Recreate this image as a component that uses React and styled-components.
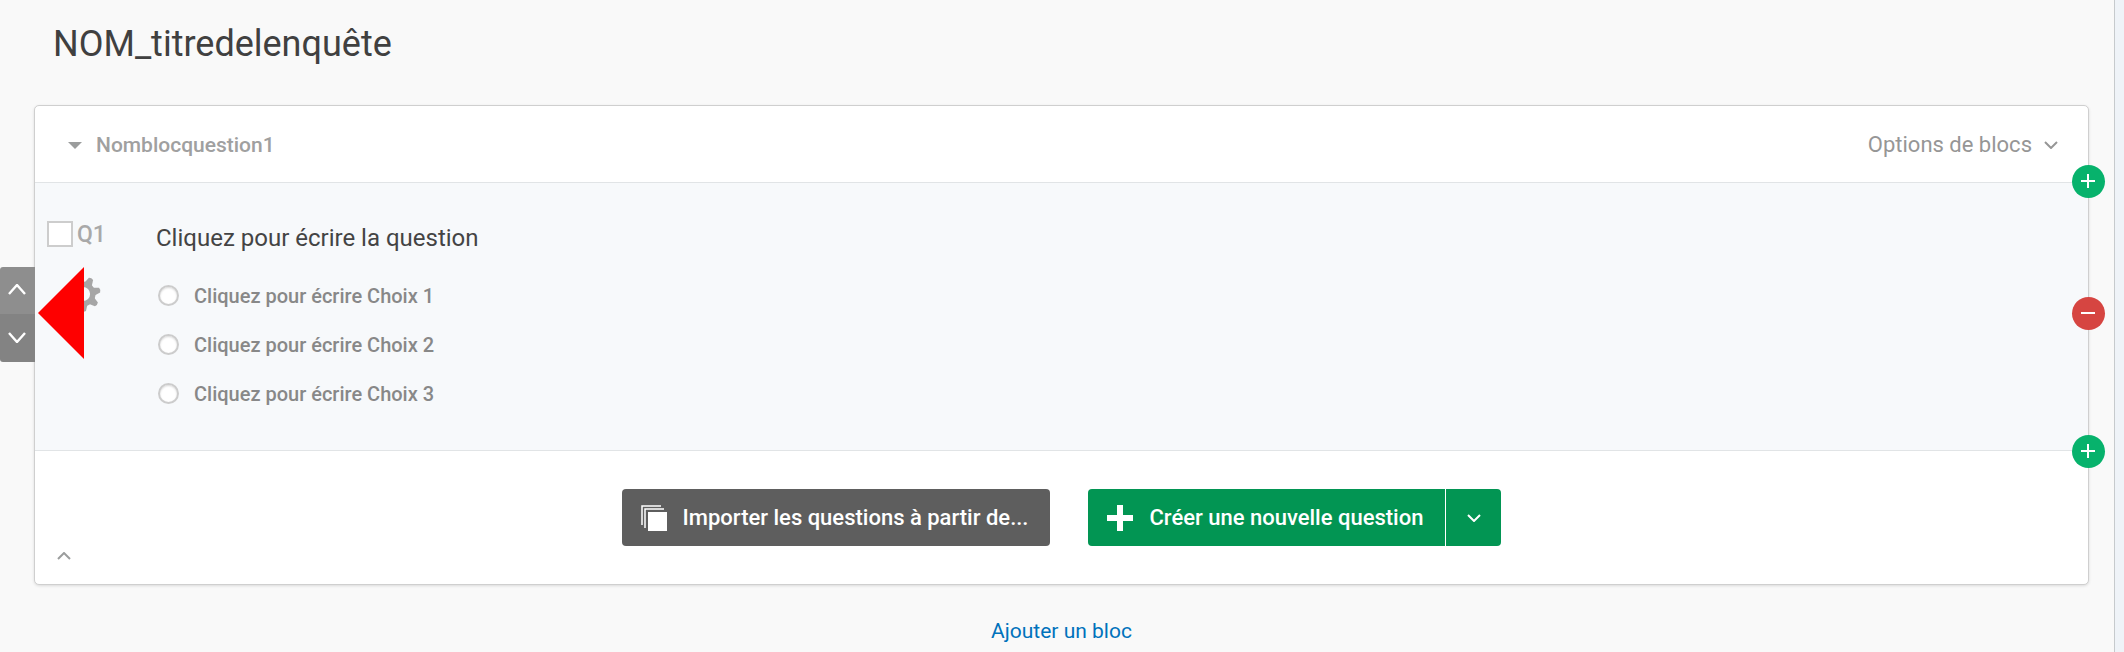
import React from "react";
import styled, { createGlobalStyle } from "styled-components";

const GlobalStyle = createGlobalStyle`
  *, *::before, *::after { box-sizing: border-box; }
  body {
    margin: 0;
    background: #f9f9f9;
    font-family: Roboto, "Liberation Sans", sans-serif;
    color: #404040;
  }
  button { font: inherit; border: 0; margin: 0; padding: 0; cursor: pointer; }
  svg { display: block; flex: none; }
`;

const Page = styled.div`
  display: flex;
  min-height: 100vh;
`;

const Main = styled.main`
  flex: 1;
  min-width: 0;
  padding: 22px 25px 8px 34px;
`;

const Rail = styled.aside`
  flex: none;
  width: 10px;
  background: #eff3f8;
  border-left: 1px solid #c6cacd;
`;

const Title = styled.h1`
  margin: 0 0 39px 19px;
  font-size: 36px;
  line-height: 44px;
  font-weight: 400;
`;

const Card = styled.section`
  background: #fff;
  border: 1px solid #cfcfcf;
  border-radius: 5px;
  box-shadow: 0 1px 3px rgba(0, 0, 0, 0.12);
`;

const BlockHeader = styled.header`
  display: flex;
  justify-content: space-between;
  align-items: center;
  height: 77px;
  padding: 2px 30px 0 33px;
  border-bottom: 1px solid #e1e4e6;
`;

const BlockToggle = styled.button`
  display: flex;
  align-items: center;
  gap: 14px;
  background: none;
  color: #9b9d9d;
`;

const BlockName = styled.span`
  font-size: 21px;
  line-height: 28px;
  font-weight: 500;
  color: #a0a0a0;
`;

const OptionsButton = styled.button`
  display: flex;
  align-items: center;
  gap: 12px;
  background: none;
  color: #969696;
  font-size: 22px;
  line-height: 28px;
`;

const Question = styled.article`
  position: relative;
  display: flex;
  padding: 38px 30px 32px 12px;
  background: #f7f9fb;
  border-bottom: 1px solid #e1e4e6;
`;

const QuestionSide = styled.div`
  flex: none;
  display: flex;
  flex-direction: column;
  align-items: flex-start;
  gap: 29px;
  width: 109px;
`;

const QuestionTag = styled.label`
  display: flex;
  align-items: center;
  gap: 4px;
  font-size: 23px;
  line-height: 25px;
  font-weight: 500;
  color: #a9a9a9;
`;

const Checkbox = styled.input`
  appearance: none;
  width: 26px;
  height: 26px;
  margin: 0;
  background: #fff;
  border: 2px solid #cdcdcd;
`;

const GearButton = styled.button`
  margin-left: 18px;
  background: none;
  color: #a6a6a6;
`;

const QuestionBody = styled.div`
  flex: 1;
  min-width: 0;
`;

const QuestionText = styled.h3`
  margin: 0 0 16px;
  font-size: 24px;
  line-height: 34px;
  font-weight: 400;
  color: #444444;
`;

const Choices = styled.ul`
  margin: 0;
  padding: 0;
  list-style: none;
`;

const Choice = styled.label`
  display: flex;
  align-items: center;
  gap: 15px;
  height: 49px;
  padding-left: 2px;
  font-size: 20px;
  line-height: 28px;
  font-weight: 500;
  color: #888888;
`;

const Radio = styled.input`
  appearance: none;
  width: 21px;
  height: 21px;
  margin: 0;
  background: #fff;
  border: 2px solid #cccccc;
  border-radius: 50%;
  box-shadow: inset 0 1px 2px rgba(0, 0, 0, 0.15);
`;

const MoveControls = styled.div`
  position: absolute;
  top: 84px;
  left: -35px;
  width: 35px;
  border-radius: 3px 0 0 3px;
  overflow: hidden;
`;

const MoveButton = styled.button`
  display: flex;
  align-items: center;
  justify-content: center;
  width: 100%;
  height: ${(p) => (p.$down ? 48 : 47)}px;
  padding: 0 2px 2px 0;
  background: ${(p) => (p.$down ? "#838383" : "#8e8e8e")};
  color: #fff;
`;

const Pointer = styled.svg`
  position: absolute;
  top: 84px;
  left: 3px;
`;

const RoundButton = styled.button`
  position: absolute;
  right: -17px;
  top: ${(p) => p.$top}px;
  display: flex;
  align-items: center;
  justify-content: center;
  width: 33px;
  height: 33px;
  border-radius: 50%;
  background: ${(p) => (p.$danger ? "#d64541" : "#07b26c")};
  color: #fff;
`;

const BlockFooter = styled.footer`
  padding: 38px 17px 18px;
`;

const Actions = styled.div`
  display: flex;
  justify-content: center;
  gap: 38px;
`;

const ActionButton = styled.button`
  display: flex;
  align-items: center;
  gap: 16px;
  height: 57px;
  padding: 0 22px 0 19px;
  border-radius: ${(p) => (p.$split ? "4px 0 0 4px" : "4px")};
  background: ${(p) => (p.$primary ? "#029553" : "#5e5e5e")};
  color: #fff;
  font-size: 22px;
  line-height: 32px;
  font-weight: 500;
`;

const SplitButton = styled.div`
  display: flex;
  gap: 1px;
`;

const MenuButton = styled.button`
  display: flex;
  align-items: center;
  justify-content: center;
  width: 55px;
  height: 57px;
  border-radius: 0 4px 4px 0;
  background: #029553;
  color: #fff;
`;

const CollapseButton = styled.button`
  display: flex;
  align-items: center;
  justify-content: center;
  width: 24px;
  height: 20px;
  background: none;
  color: #9b9d9d;
`;

const AddBlock = styled.div`
  padding-top: 33px;
  text-align: center;
  font-size: 21px;
  line-height: 26px;
`;

const AddLink = styled.a`
  color: #0072bc;
  text-decoration: none;
`;

function Chevron({ up = false, width = 14, height = 8, stroke = 2 }) {
  const e = 1;
  const points = up
    ? `${e},${height - e} ${width / 2},${e} ${width - e},${height - e}`
    : `${e},${e} ${width / 2},${height - e} ${width - e},${e}`;
  return (
    <svg width={width} height={height} viewBox={`0 0 ${width} ${height}`} aria-hidden="true">
      <polyline points={points} fill="none" stroke="currentColor" strokeWidth={stroke} />
    </svg>
  );
}

function Sign({ minus = false }) {
  return (
    <svg width="15" height="15" viewBox="0 0 15 15" fill="currentColor" aria-hidden="true">
      <rect x="0" y="6" width="14" height="2" />
      {!minus && <rect x="6" y="0" width="2" height="14" />}
    </svg>
  );
}

function Gear() {
  const teeth = [28, 77, 128, 178, 222, 262, 302, 344];
  return (
    <svg width="36" height="36" viewBox="-18 -18 36 36" aria-hidden="true">
      <circle r="9.8" fill="none" stroke="currentColor" strokeWidth="5.4" />
      {teeth.map((a) => (
        <path key={a} d="M-4,-11 L-2.4,-17 Q0,-18.4 2.4,-17 L4,-11 Z" fill="currentColor" transform={`rotate(${a})`} />
      ))}
    </svg>
  );
}

function StackIcon() {
  return (
    <svg width="26" height="26" viewBox="0 0 26 26" aria-hidden="true">
      <path d="M1 20V1H20M4 23V4H23" fill="none" stroke="#fff" strokeWidth="1.5" />
      <rect x="7" y="7" width="19" height="19" fill="#fff" />
    </svg>
  );
}

function PlusIcon() {
  return (
    <svg width="26" height="26" viewBox="0 0 26 26" fill="#fff" aria-hidden="true">
      <path d="M10 0h6v10h10v6H16v10h-6V16H0v-6h10z" />
    </svg>
  );
}

const choices = ["Cliquez pour écrire Choix 1", "Cliquez pour écrire Choix 2", "Cliquez pour écrire Choix 3"];

export default function App() {
  return (
    <>
      <GlobalStyle />
      <Page>
        <Main>
          <Title>NOM_titredelenquête</Title>
          <Card>
            <BlockHeader>
              <BlockToggle type="button" aria-expanded="true">
                <svg width="14" height="7" viewBox="0 0 14 7" fill="currentColor" aria-hidden="true">
                  <path d="M0 0h14L7 7z" />
                </svg>
                <BlockName>Nomblocquestion1</BlockName>
              </BlockToggle>
              <OptionsButton type="button">
                Options de blocs
                <Chevron />
              </OptionsButton>
            </BlockHeader>

            <Question>
              <QuestionSide>
                <QuestionTag>
                  <Checkbox type="checkbox" />
                  Q1
                </QuestionTag>
                <GearButton type="button" aria-label="Paramètres">
                  <Gear />
                </GearButton>
              </QuestionSide>
              <QuestionBody>
                <QuestionText>Cliquez pour écrire la question</QuestionText>
                <Choices>
                  {choices.map((text) => (
                    <li key={text}>
                      <Choice>
                        <Radio type="radio" name="q1" />
                        {text}
                      </Choice>
                    </li>
                  ))}
                </Choices>
              </QuestionBody>

              <MoveControls>
                <MoveButton type="button" aria-label="Monter">
                  <Chevron up width={18} height={11} stroke={2.4} />
                </MoveButton>
                <MoveButton type="button" aria-label="Descendre" $down>
                  <Chevron width={18} height={11} stroke={2.4} />
                </MoveButton>
              </MoveControls>
              <Pointer width="46" height="92" viewBox="0 0 46 92" aria-hidden="true">
                <path d="M46 0v92L0 46z" fill="#fe0000" />
              </Pointer>

              <RoundButton type="button" aria-label="Ajouter avant" $top={-18}>
                <Sign />
              </RoundButton>
              <RoundButton type="button" aria-label="Supprimer" $top={114} $danger>
                <Sign minus />
              </RoundButton>
              <RoundButton type="button" aria-label="Ajouter après" $top={252}>
                <Sign />
              </RoundButton>
            </Question>

            <BlockFooter>
              <Actions>
                <ActionButton type="button">
                  <StackIcon />
                  Importer les questions à partir de...
                </ActionButton>
                <SplitButton>
                  <ActionButton type="button" $primary $split>
                    <PlusIcon />
                    Créer une nouvelle question
                  </ActionButton>
                  <MenuButton type="button" aria-label="Autres types">
                    <Chevron />
                  </MenuButton>
                </SplitButton>
              </Actions>
              <CollapseButton type="button" aria-label="Replier">
                <Chevron up />
              </CollapseButton>
            </BlockFooter>
          </Card>
          <AddBlock>
            <AddLink href="#bloc">Ajouter un bloc</AddLink>
          </AddBlock>
        </Main>
        <Rail />
      </Page>
    </>
  );
}
